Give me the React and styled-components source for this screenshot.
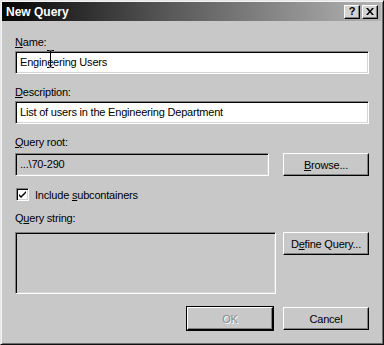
import React from "react";
import styled, { createGlobalStyle } from "styled-components";

const Global = createGlobalStyle`
  html, body {
    margin: 0;
    padding: 0;
    background: #c8c8c8;
  }
  body {
    font-family: "Liberation Sans", Arial, sans-serif;
    font-size: 11px;
    color: #000;
  }
`;

const Dialog = styled.div`
  box-sizing: border-box;
  width: 384px;
  height: 345px;
  background: #c8c8c8;
  border-top: 1px solid #e6e6e6;
  border-left: 1px solid #e6e6e6;
  border-right: 1px solid #101010;
  border-bottom: 1px solid #101010;
  box-shadow: inset 1px 1px 0 #f4f4f4, inset -1px -1px 0 #6e6e6e;
  padding: 1px 2px 2px 1px;
  display: flex;
  flex-direction: column;
`;

const TitleBar = styled.div`
  height: 19px;
  display: flex;
  align-items: center;
  padding: 0 3px 0 3px;
  background: linear-gradient(to right, #050505 0%, #5a5a5a 45%, #b4b4b4 100%);
`;

const Title = styled.div`
  flex: 1;
  color: #fff;
  font-weight: bold;
  font-size: 12px;
  padding-left: 1px;
`;

const CaptionButton = styled.div`
  box-sizing: border-box;
  width: 16px;
  height: 14px;
  margin-left: ${(p) => (p.$gap ? "2px" : "0")};
  background: #d4d4d4;
  border-top: 1px solid #fff;
  border-left: 1px solid #fff;
  border-right: 1px solid #000;
  border-bottom: 1px solid #000;
  box-shadow: inset -1px -1px 0 #808080;
  display: flex;
  align-items: center;
  justify-content: center;
  font-weight: bold;
  font-size: 11px;
  line-height: 1;
  color: #000;
`;

const Body = styled.div`
  flex: 1;
  padding: 14px 12px 0 13px;
  display: flex;
  flex-direction: column;
`;

const Label = styled.div`
  height: 13px;
  line-height: 13px;
  letter-spacing: -0.2px;
  margin-top: ${(p) => p.$top || 0}px;
  margin-bottom: ${(p) => p.$bottom || 2}px;
`;

const U = styled.span`
  text-decoration: underline;
  text-underline-offset: 1px;
`;

const Sunken = styled.div`
  position: relative;
  box-sizing: border-box;
  width: ${(p) => (p.$width ? `${p.$width}px` : "auto")};
  height: ${(p) => p.$height || 23}px;
  background: ${(p) => (p.$disabled ? "#c8c8c8" : "#fff")};
  border-top: 1px solid #808080;
  border-left: 1px solid #808080;
  border-right: 1px solid #fff;
  border-bottom: 1px solid #fff;
  box-shadow: inset 1px 1px 0 #000, inset -1px -1px 0 #d4d4d4;
  padding: 0 4px;
  line-height: 21px;
  letter-spacing: -0.2px;
  white-space: nowrap;
`;

const Row = styled.div`
  display: flex;
  align-items: flex-start;
  justify-content: ${(p) => p.$justify || "space-between"};
  gap: ${(p) => p.$gap || 0}px;
  margin-top: ${(p) => p.$top || 0}px;
`;

const Button = styled.div`
  box-sizing: border-box;
  width: 86px;
  height: 23px;
  background: #c8c8c8;
  border-top: 1px solid #fff;
  border-left: 1px solid #fff;
  border-right: 1px solid #000;
  border-bottom: 1px solid #000;
  box-shadow: inset -1px -1px 0 #808080;
  outline: ${(p) => (p.$default ? "1px solid #000" : "none")};
  display: flex;
  align-items: center;
  justify-content: center;
  letter-spacing: -0.2px;
  color: ${(p) => (p.$disabled ? "#8a8a8a" : "#000")};
  text-shadow: ${(p) => (p.$disabled ? "1px 1px 0 #fff" : "none")};
`;

const CheckRow = styled.label`
  display: flex;
  align-items: center;
  gap: 6px;
  margin-top: 12px;
  padding-left: 1px;
  letter-spacing: -0.2px;
`;

const CheckBox = styled.div`
  box-sizing: border-box;
  width: 13px;
  height: 13px;
  background: #fff;
  border-top: 1px solid #808080;
  border-left: 1px solid #808080;
  border-right: 1px solid #fff;
  border-bottom: 1px solid #fff;
  box-shadow: inset 1px 1px 0 #000, inset -1px -1px 0 #d4d4d4;
  display: flex;
  align-items: center;
  justify-content: center;
`;

const Cursor = styled.svg`
  position: absolute;
  left: 30px;
  top: -2px;
`;

export default function App() {
  return (
    <>
      <Global />
      <Dialog>
        <TitleBar>
          <Title>New Query</Title>
          <CaptionButton>?</CaptionButton>
          <CaptionButton $gap>
            <svg width="8" height="7" viewBox="0 0 8 7">
              <path d="M0 0h2l2 2.5L6 0h2L5 3.5 8 7H6L4 4.5 2 7H0l3-3.5z" fill="#000" />
            </svg>
          </CaptionButton>
        </TitleBar>
        <Body>
          <Label $top={1}>
            <U>N</U>ame:
          </Label>
          <Sunken>
            Engineering Users
            <Cursor width="9" height="18" viewBox="0 0 9 18">
              <path d="M1 0.5h2.5M5.5 0.5H8M4.5 1v16M1 17.5h2.5M5.5 17.5H8" stroke="#000" strokeWidth="1" fill="none" />
              <path d="M3.5 1h2M3.5 17h2" stroke="#000" />
            </Cursor>
          </Sunken>
          <Label $top={12}>
            <U>D</U>escription:
          </Label>
          <Sunken>List of users in the Engineering Department</Sunken>
          <Label $top={12} $bottom={4}>
            <U>Q</U>uery root:
          </Label>
          <Row>
            <Sunken $disabled $width={254}>...\70-290</Sunken>
            <Button>
              <span>
                <U>B</U>rowse...
              </span>
            </Button>
          </Row>
          <CheckRow>
            <CheckBox>
              <svg width="9" height="9" viewBox="0 0 9 9">
                <path d="M1 4l2 2 5-5v2L3 8 1 6z" fill="#000" />
              </svg>
            </CheckBox>
            <span>
              Include <U>s</U>ubcontainers
            </span>
          </CheckRow>
          <Label $top={11} $bottom={7}>
            Q<U>u</U>ery string:
          </Label>
          <Row>
            <Sunken $disabled $width={261} $height={62} />
            <Button>
              <span>
                D<U>e</U>fine Query...
              </span>
            </Button>
          </Row>
          <Row $justify="flex-end" $gap={10} $top={13}>
            <Button $default $disabled>OK</Button>
            <Button>Cancel</Button>
          </Row>
        </Body>
      </Dialog>
    </>
  );
}
